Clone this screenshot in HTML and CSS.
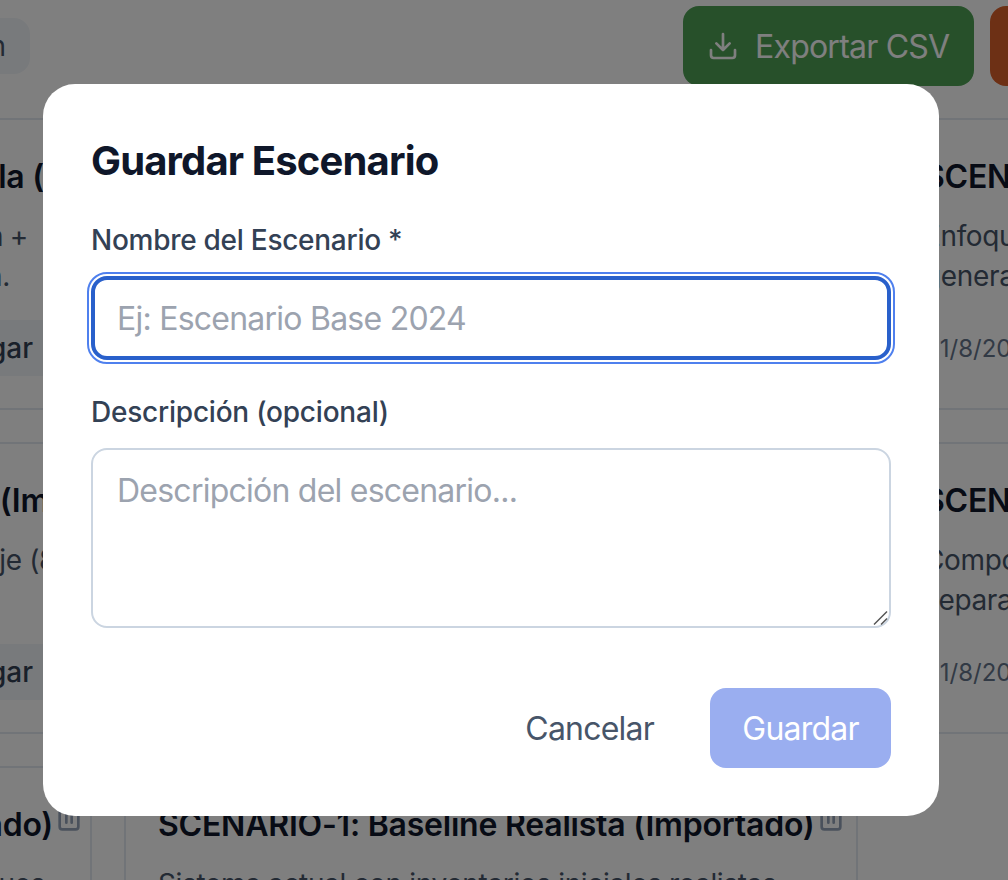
FILE: index.html
```html
<!DOCTYPE html>
<html lang="es">
<head>
<meta charset="utf-8">
<title>Guardar Escenario</title>
<link rel="stylesheet" href="styles.css">
</head>
<body>
<svg class="defs" aria-hidden="true">
  <symbol id="trash" viewBox="0 0 24 24"><path d="M3 6h18M19 6v14a2 2 0 0 1-2 2H7a2 2 0 0 1-2-2V6M8 6V4a2 2 0 0 1 2-2h4a2 2 0 0 1 2 2v2M10 11v6M14 11v6"/></symbol>
  <symbol id="download" viewBox="0 0 24 24"><path d="M21 15v4a2 2 0 0 1-2 2H5a2 2 0 0 1-2-2v-4M7 10l5 5 5-5M12 15V3"/></symbol>
</svg>
<div class="page">
  <header class="toolbar">
    <button class="tab">n</button>
    <div class="actions">
      <button class="btn export"><svg class="icon"><use href="#download"/></svg><span>Exportar CSV</span></button>
      <button class="btn delete"></button>
    </div>
  </header>
  <main class="grid">
    <article class="card prev">
      <div class="head"><h3 class="title t1">la (</h3></div>
      <div class="desc"><p class="d1">n +</p><p class="d2">n.</p></div>
      <div class="foot"><button class="load">Cargar</button></div>
    </article>
    <article class="card"></article>
    <article class="card">
      <div class="head"><h3 class="title">SCENARIO</h3></div>
      <div class="desc"><p>Enfoque en</p><p>generación</p></div>
      <div class="foot"><span class="date">11/8/2025</span></div>
    </article>
    <article class="card prev">
      <div class="head"><h3 class="title t2">(Im</h3></div>
      <div class="desc"><p class="d3">je (8</p></div>
      <div class="foot"><button class="load">Cargar</button></div>
    </article>
    <article class="card">
      <div class="head"><h3 class="title long"></h3><svg class="icon trash"><use href="#trash"/></svg></div>
    </article>
    <article class="card">
      <div class="head"><h3 class="title">SCENARIO</h3></div>
      <div class="desc"><p>Comportamiento</p><p>separado</p></div>
      <div class="foot"><span class="date">11/8/2025</span></div>
    </article>
    <article class="card prev">
      <div class="head"><h3 class="title t3">(Importado)</h3><svg class="icon trash"><use href="#trash"/></svg></div>
      <div class="desc"><p class="d4">bloques</p></div>
    </article>
    <article class="card">
      <div class="head"><h3 class="title base">SCENARIO-1: Baseline Realista (Importado)</h3><svg class="icon trash"><use href="#trash"/></svg></div>
      <div class="desc"><p>Sistema actual con inventarios iniciales realistas</p></div>
    </article>
  </main>
</div>
<div class="overlay">
  <form class="modal">
    <h2 class="modal-title">Guardar Escenario</h2>
    <label class="label">Nombre del Escenario *</label>
    <div class="field focused">Ej: Escenario Base 2024</div>
    <label class="label second">Descripción (opcional)</label>
    <div class="field area">Descripción del escenario...
      <svg class="grip" viewBox="0 0 16 16"><path d="M1 14.500 14 1.500M8 14.500l6-6"/></svg>
    </div>
    <div class="buttons">
      <button type="button" class="btn cancel">Cancelar</button>
      <button type="button" class="btn save">Guardar</button>
    </div>
  </form>
</div>
</body>
</html>
```
FILE: styles.css
```css
* { box-sizing: border-box; margin: 0; padding: 0; }
body { width: 1008px; height: 880px; overflow: hidden; background: #fff; font-family: Inter, "Liberation Sans", sans-serif; color: #0f172a; }
button { border: 0; font: inherit; }
.defs { display: none; }
.page { height: 880px; overflow: hidden; }
.icon { width: 32px; height: 32px; flex: none; fill: none; stroke: currentColor; stroke-width: 2; stroke-linecap: round; stroke-linejoin: round; }

.toolbar { display: flex; justify-content: space-between; height: 118px; padding-top: 6px; }
.tab { width: 100px; height: 56px; margin: 12px 0 0 -70px; padding-right: 24px; border-radius: 16px; background: #f1f5f9; color: #475569; font-size: 28px; text-align: right; }
.actions { display: flex; gap: 16px; margin-right: -200px; }
.btn { display: flex; align-items: center; height: 80px; border-radius: 16px; font-size: 32px; letter-spacing: -0.78px; color: #fff; white-space: nowrap; }
.export { width: 291px; padding-left: 24px; gap: 16px; background: #4ea155; }
.delete { width: 218px; background: #db602a; }

.grid { display: grid; grid-template-columns: repeat(3, 734px); grid-auto-rows: 292px; gap: 32px; margin-left: -642px; }
.card { border: 2px solid #e2e8f0; border-radius: 16px; padding: 32px; background: #fff; white-space: nowrap; }
.head { display: flex; height: 48px; margin-bottom: 16px; }
.title { flex: none; font-size: 32px; line-height: 50px; font-weight: 600; letter-spacing: -0.22px; }
.trash { color: #94a3b8; }
.desc { height: 80px; margin-bottom: 24px; font-size: 28px; line-height: 40px; letter-spacing: -0.35px; color: #475569; }
.foot { display: flex; align-items: center; height: 56px; }
.date { padding-left: 6px; font-size: 24px; color: #64748b; }
.load { width: 666px; height: 56px; padding-right: 25px; border-radius: 12px; background: #f1f5f9; color: #334155; font-size: 28px; font-weight: 500; text-align: right; }
.prev .title { text-align: right; }
.prev .desc { text-align: right; }
.t1 { width: 652px; }
.t2 { width: 657px; }
.t3 { width: 661px; }
.d1 { padding-right: 30px; word-spacing: -1px; }
.d2 { padding-right: 48px; }
.d3 { padding-right: 2px; }
.d4 { padding-right: 13px; }
.long { width: 756px; }
.base { width: 657px; }

.overlay { position: fixed; inset: 0; display: flex; align-items: flex-start; padding: 84px 0 0 43px; background: rgba(0, 0, 0, 0.5); }
.modal { width: 896px; height: 732px; padding: 48px; border-radius: 32px; background: #fff; }
.modal-title { height: 56px; margin-bottom: 32px; font-size: 40px; line-height: 58px; font-weight: 700; letter-spacing: -0.85px; }
.label { display: block; margin-bottom: 16px; font-size: 28px; line-height: 40px; font-weight: 500; letter-spacing: -0.27px; color: #334155; }
.second { margin-top: 32px; letter-spacing: -0.22px; }
.field { border: 2px solid #cbd5e1; border-radius: 16px; padding: 17px 24px 15px; font-size: 32px; line-height: 48px; letter-spacing: -0.76px; color: #9ca3af; }
.focused { height: 84px; padding: 15px 22px 13px; border: 4px solid #2960cb; outline: 2px solid #4f80ee; outline-offset: 2px; }
.area { position: relative; height: 180px; }
.grip { position: absolute; right: 0; bottom: 0; width: 16px; height: 16px; fill: none; stroke: #555; stroke-width: 1.5; }
.buttons { display: flex; justify-content: flex-end; gap: 24px; margin-top: 60px; }
.cancel { padding: 0 32px; background: none; color: #475569; }
.save { width: 181px; justify-content: center; background: #9aaef0; }
```
